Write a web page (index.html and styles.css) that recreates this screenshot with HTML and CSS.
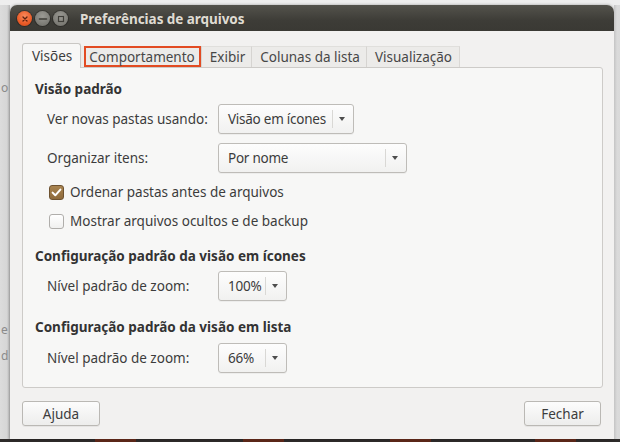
FILE: index.html
```html
<!DOCTYPE html>
<html lang="pt">
<head>
<meta charset="utf-8">
<title>Preferências de arquivos</title>
<link rel="stylesheet" href="styles.css">
</head>
<body>
<div class="screen">
  <div class="bg-left">
    <span class="bg-letter l1">o</span>
    <span class="bg-letter l2">e</span>
    <span class="bg-letter l3">d</span>
  </div>
  <div class="window">
    <div class="titlebar">
      <span class="wbtn close"><svg viewBox="0 0 14 14" width="14" height="14"><path d="M5 5 L9 9 M9 5 L5 9" stroke="#5a2210" stroke-width="1.3" stroke-linecap="round"/></svg></span>
      <span class="wbtn grey"><svg viewBox="0 0 14 14" width="14" height="14"><path d="M3.5 7 H10.5" stroke="#3f3e39" stroke-width="1.6" stroke-linecap="round"/></svg></span>
      <span class="wbtn grey"><svg viewBox="0 0 14 14" width="14" height="14"><rect x="4.5" y="4.5" width="5" height="5" fill="none" stroke="#3f3e39" stroke-width="1.2"/></svg></span>
      <span class="title">Preferências de arquivos</span>
    </div>
    <div class="body">
      <div class="tabs">
        <div class="tab active">Visões</div>
        <div class="tab first"><span class="mark">Comportamento</span></div>
        <div class="tab">Exibir</div>
        <div class="tab">Colunas da lista</div>
        <div class="tab">Visualização</div>
      </div>
      <div class="panel">
        <div class="heading">Visão padrão</div>
        <div class="rows r1">
          <span class="label">Ver novas pastas usando:</span>
          <span class="combo w136"><span class="value">Visão em ícones</span><span class="arrow"></span></span>
          <span class="label">Organizar itens:</span>
          <span class="combo w189"><span class="value">Por nome</span><span class="arrow"></span></span>
        </div>
        <div class="checks">
          <label class="check"><span class="box on"><svg viewBox="0 0 15 15" width="15" height="15"><path d="M3.6 7.6 L6.3 10.3 L11.4 4.6" fill="none" stroke="#fff" stroke-width="2" stroke-linecap="round" stroke-linejoin="round"/></svg></span>Ordenar pastas antes de arquivos</label>
          <label class="check"><span class="box"></span>Mostrar arquivos ocultos e de backup</label>
        </div>
        <div class="heading h2 first-h2">Configuração padrão da visão em ícones</div>
        <div class="rows r2">
          <span class="label">Nível padrão de zoom:</span>
          <span class="combo w69"><span class="value">100%</span><span class="arrow"></span></span>
        </div>
        <div class="heading h2">Configuração padrão da visão em lista</div>
        <div class="rows r3">
          <span class="label">Nível padrão de zoom:</span>
          <span class="combo w69"><span class="value">66%</span><span class="arrow"></span></span>
        </div>
      </div>
      <div class="actions">
        <button class="btn help">Ajuda</button>
        <button class="btn close-btn">Fechar</button>
      </div>
    </div>
  </div>
  <div class="bg-right"></div>
</div>
<div class="taskbar">
  <span class="spot s1"></span>
  <span class="spot s2"></span>
  <span class="spot s3"></span>
  <span class="spot s4"></span>
</div>
</body>
</html>
```
FILE: styles.css
```css
* { box-sizing: border-box; }
html, body {
  margin: 0;
  padding: 0;
}
body {
  width: 620px;
  height: 442px;
  overflow: hidden;
  background: #e9e9e8;
  font-family: "Noto Sans", "Open Sans", sans-serif;
  font-size: 13.5px;
  color: #3c3c3c;
}
.screen {
  display: flex;
  height: 439px;
  padding-top: 5px;
  background: linear-gradient(#eeeeee, #e4e4e4);
}
.bg-left {
  width: 10px;
  flex: none;
  display: flex;
  flex-direction: column;
  background: linear-gradient(90deg, #dcdcdc 0, #d6d6d6 7px, #b9b9b9 10px);
  color: #8a8a8a;
  font-size: 12px;
  line-height: 20px;
}
.bg-letter { display: block; margin-left: 1px; }
.l1 { margin-top: 73px; }
.l2 { margin-top: 222px; }
.l3 { margin-top: 6px; }
.window {
  width: 604px;
  flex: none;
  background: #f2f1f0;
  border-radius: 7px 7px 0 0;
  box-shadow: 0 0 3px rgba(0,0,0,0.35);
  display: flex;
  flex-direction: column;
}
.bg-right {
  flex: 1;
  background: linear-gradient(90deg, #c4c4c4, #dadada 3px, #d9d9d9);
}
.titlebar {
  height: 26px;
  flex: none;
  display: flex;
  align-items: center;
  gap: 3px;
  padding-left: 7px;
  padding-top: 1px;
  border-radius: 7px 7px 0 0;
  background: linear-gradient(#54534c, #3d3c37 60%, #3a3934);
}
.wbtn {
  width: 15px;
  height: 15px;
  border-radius: 50%;
  display: flex;
  align-items: center;
  justify-content: center;
}
.wbtn svg { display: block; }
.close {
  background: radial-gradient(circle at 50% 35%, #f78a5d, #e95b27 60%, #c9461a);
  box-shadow: 0 0 0 1px rgba(0,0,0,0.25);
}
.grey {
  background: radial-gradient(circle at 50% 35%, #9b9a94, #7d7c76 65%, #6a6964);
  box-shadow: 0 0 0 1px rgba(0,0,0,0.25);
}
.title {
  margin-left: 9px;
  color: #dfdbd2;
  font-weight: 700;
  font-size: 13.5px;
  letter-spacing: -0.05px;
}
.body {
  flex: 1;
  padding: 12px 11px 0 12px;
  display: flex;
  flex-direction: column;
}
.tabs {
  display: flex;
  align-items: flex-end;
  height: 25px;
  margin-bottom: -1px;
  position: relative;
  z-index: 1;
}
.tab {
  height: 21px;
  margin-bottom: 1px;
  padding: 0 6px 0 8px;
  display: flex;
  align-items: center;
  color: #474747;
  background: #ecebe9;
  border-top: 1px solid #e0dfdc;
  border-right: 1px solid #d6d4d1;
}
.tab:last-child { border-right: 1px solid #dad8d5; padding-right: 7px; }
.tab.active {
  height: 25px;
  margin-bottom: 0;
  padding: 0 8px 0 9px;
  background: #f7f7f6;
  border: 1px solid #c9c7c4;
  border-bottom: none;
  border-radius: 3px 3px 0 0;
  color: #3c3c3c;
}
.tab.first {
  padding: 0 0 0 3px;
  border-top: none;
  background: #ecebe9;
}
.mark {
  height: 21px;
  display: flex;
  align-items: center;
  padding: 0 4px 0 3px;
  border: 2px solid #e24b22;
}
.panel {
  height: 321px;
  width: 581px;
  flex: none;
  background: #f7f7f6;
  border: 1px solid #cdcbc8;
  border-radius: 0 3px 3px 3px;
  padding: 11px 12px 0 12px;
}
.heading {
  height: 20px;
  line-height: 20px;
  font-weight: 700;
  color: #333333;
}
.heading.h2 { margin-top: 16px; }
.heading.first-h2 { margin-top: 14px; }
.rows {
  display: grid;
  grid-template-columns: 171px auto;
  justify-items: start;
  align-items: center;
  row-gap: 9px;
  padding-left: 12px;
}
.r1 { margin-top: 5px; }
.r2 { margin-top: 5px; }
.r3 { margin-top: 6px; }
.label { color: #3c3c3c; }
.combo {
  height: 30px;
  display: flex;
  align-items: center;
  border: 1px solid #bebcb8;
  border-radius: 3px;
  background: linear-gradient(#fdfdfd, #f1f1f0);
  box-shadow: 0 1px 0 rgba(0,0,0,0.04);
}
.w136 { width: 136px; }
.w189 { width: 189px; }
.w69 { width: 69px; }
.combo .value {
  flex: 1;
  padding-left: 9px;
  white-space: nowrap;
  letter-spacing: -0.25px;
}
.combo .arrow {
  width: 21px;
  height: 18px;
  border-left: 1px solid #d9d8d5;
  position: relative;
  flex: none;
}
.combo .arrow::after {
  content: "";
  position: absolute;
  left: 6px;
  top: 7px;
  border-left: 3.5px solid transparent;
  border-right: 3.5px solid transparent;
  border-top: 4px solid #4d4d4d;
}
.checks {
  margin-top: 8px;
  padding-left: 14px;
  display: flex;
  flex-direction: column;
  gap: 7px;
}
.check {
  height: 22px;
  display: flex;
  align-items: center;
  gap: 6px;
}
.box {
  width: 15px;
  height: 15px;
  border-radius: 3px;
  border: 1px solid #b0aeab;
  background: linear-gradient(#ffffff, #f0f0ef);
  flex: none;
}
.box.on {
  border-color: #6e5230;
  background: linear-gradient(#a98450, #8e6a3b);
  position: relative;
}
.box.on svg { position: absolute; left: -1px; top: -1px; }
.actions {
  margin-top: 13px;
  display: flex;
  justify-content: space-between;
  padding-right: 2px;
}
.btn {
  height: 25px;
  border: 1px solid #bab8b4;
  border-radius: 3px;
  background: linear-gradient(#fcfcfc, #ededec);
  font-family: inherit;
  font-size: 13.5px;
  color: #3c3c3c;
  padding: 0;
  box-shadow: 0 1px 0 rgba(0,0,0,0.05);
}
.help { width: 78px; }
.close-btn { width: 77px; }
.taskbar {
  height: 3px;
  display: flex;
  background: #2e2b2a;
}
.spot {
  width: 41px;
  height: 3px;
  background: #5a2618;
}
.s1 { margin-left: 95px; }
.s2 { margin-left: 107px; }
.s3 { margin-left: 106px; }
.s4 { margin-left: 104px; }
```
